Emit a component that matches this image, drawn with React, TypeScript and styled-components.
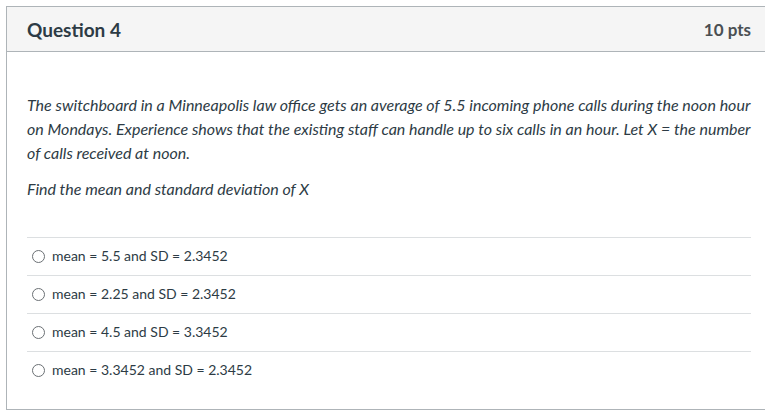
import React from "react";
import styled, { createGlobalStyle } from "styled-components";

const Global = createGlobalStyle`
  html, body { margin: 0; padding: 0; background: #fff; }
  body { font-family: Lato, "Open Sans", sans-serif; color: #2d3b45; overflow: hidden; }
`;

const Page = styled.div`
  padding: 6px 0 0 6px;
`;

const Card = styled.div`
  width: 764px;
  border: 1px solid #aeb4b8;
  box-sizing: content-box;
`;

const Header = styled.div`
  height: 44px;
  background: #f5f5f5;
  border-bottom: 1px solid #aeb4b8;
  display: flex;
  align-items: center;
  justify-content: space-between;
  padding: 0 20px;
`;

const Title = styled.h2`
  margin: 0;
  font-size: 19px;
  font-weight: 700;
  color: #2d3b45;
`;

const Points = styled.span`
  font-size: 17px;
  font-weight: 700;
  color: #4a4f53;
  padding-top: 1px;
`;

const Body = styled.div`
  padding: 41px 20px 20px 20px;
`;

const Text = styled.div`
  width: 724px;
  font-style: italic;
  font-size: 16px;
  line-height: 24px;
`;

const Para = styled.p`
  margin: 0 0 12px 0;
`;

const Answers = styled.div`
  width: 724px;
  margin-top: 36px;
`;

const Row = styled.label`
  display: flex;
  align-items: center;
  height: 35px;
  padding-bottom: 2px;
  border-top: 1px solid #dcdfe1;
  font-size: 14px;
  color: #2d3b45;
`;

const Radio = styled.span`
  width: 11px;
  height: 11px;
  border: 1px solid #6b7074;
  border-radius: 50%;
  margin: 2px 7px 0 5px;
  flex: none;
`;

const answers = [
  "mean = 5.5 and SD = 2.3452",
  "mean = 2.25 and SD = 2.3452",
  "mean = 4.5 and SD = 3.3452",
  "mean = 3.3452 and SD = 2.3452",
];

export default function App() {
  return (
    <>
      <Global />
      <Page>
        <Card>
          <Header>
            <Title>Question 4</Title>
            <Points>10 pts</Points>
          </Header>
          <Body>
            <Text>
              <Para>
                The switchboard in a Minneapolis law office gets an average of 5.5 incoming phone calls during the noon hour on Mondays. Experience shows that the existing staff can handle up to six calls in an hour. Let X = the number of calls received at noon.
              </Para>
              <Para>Find the mean and standard deviation of X</Para>
            </Text>
            <Answers>
              {answers.map((a) => (
                <Row key={a}>
                  <Radio />
                  {a}
                </Row>
              ))}
            </Answers>
          </Body>
        </Card>
      </Page>
    </>
  );
}
